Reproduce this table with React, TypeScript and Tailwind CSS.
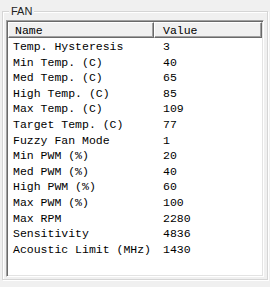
const rows: [string, string][] = [
  ['Temp. Hysteresis', '3'],
  ['Min Temp. (C)', '40'],
  ['Med Temp. (C)', '65'],
  ['High Temp. (C)', '85'],
  ['Max Temp. (C)', '109'],
  ['Target Temp. (C)', '77'],
  ['Fuzzy Fan Mode', '1'],
  ['Min PWM (%)', '20'],
  ['Med PWM (%)', '40'],
  ['High PWM (%)', '60'],
  ['Max PWM (%)', '100'],
  ['Max RPM', '2280'],
  ['Sensitivity', '4836'],
  ['Acoustic Limit (MHz)', '1430'],
]

const mono = "font-['Liberation_Mono','Courier_New',monospace] text-[11.5px] text-black"

function HeaderCell({ label, className = '' }: { label: string; className?: string }) {
  return (
    <div
      className={`h-[16px] leading-[15px] bg-[#f0f0f0] border-t border-l border-t-white border-l-white border-r border-b border-r-[#696969] border-b-[#696969] shadow-[inset_-1px_-1px_0_#a0a0a0] pl-[6px] ${className}`}
    >
      {label}
    </div>
  )
}

export default function App() {
  return (
    <div className="w-[270px] h-[287px] bg-[#f0f0f0] pt-[11px] px-[2px]">
      {/* FAN group box */}
      <div className="relative h-[269px] border border-[#d5d5d5] shadow-[inset_1px_1px_0_#ffffff,1px_1px_0_#ffffff] px-[3px] pt-[8px]">
        <span className="absolute left-[6px] -top-[7px] bg-[#f0f0f0] px-[2px] font-['Liberation_Sans',Arial,sans-serif] text-[11px] leading-[13px] text-[#222]">
          FAN
        </span>

        {/* list view */}
        <div className={`h-[257px] bg-white border border-t-[#a0a0a0] border-l-[#a0a0a0] border-b-white border-r-white shadow-[inset_1px_1px_0_#696969,inset_-1px_-1px_0_#e3e3e3] p-[1px] ${mono}`}>
          <div className="flex">
            <HeaderCell label="Name" className="w-[146px]" />
            <HeaderCell label="Value" className="flex-1 pl-[8px]" />
          </div>
          <div className="pt-[1px]">
            {rows.map(([name, value]) => (
              <div key={name} className="flex h-[15.6px] leading-[15.6px]">
                <div className="w-[146px] pl-[5px] whitespace-nowrap">{name}</div>
                <div className="pl-[9px]">{value}</div>
              </div>
            ))}
          </div>
        </div>
      </div>
    </div>
  )
}
